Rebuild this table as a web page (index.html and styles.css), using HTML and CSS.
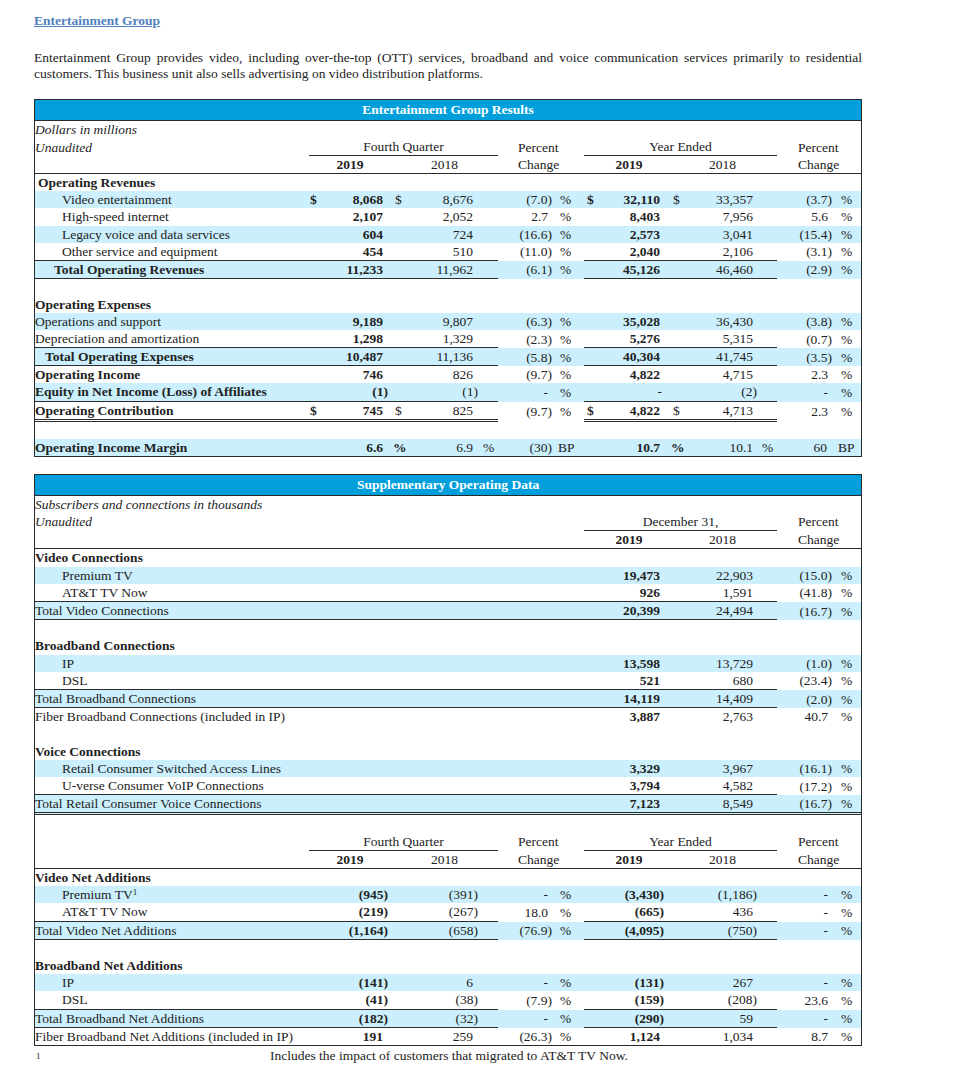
FILE: index.html
```html
<!DOCTYPE html>
<html lang="en">
<head>
<meta charset="utf-8">
<title>Entertainment Group</title>
<link rel="stylesheet" href="styles.css">
</head>
<body>
<div class="page">
  <div class="heading">Entertainment Group</div>
  <p class="intro">Entertainment Group provides video, including over-the-top (OTT) services, broadband and voice communication services primarily to residential customers. This business unit also sells advertising on video distribution platforms.</p>

  <table class="fin first">
    <colgroup>
      <col style="width:274px"><col style="width:14px"><col style="width:68px"><col style="width:14px"><col style="width:73px"><col style="width:20px"><col style="width:54px"><col style="width:32px"><col style="width:14px"><col style="width:66px"><col style="width:14px"><col style="width:80px"><col style="width:19px"><col style="width:56px"><col style="width:28px">
    </colgroup>
    <tr><th colspan="15" class="title">Entertainment Group Results</th></tr>
    <tr><td colspan="15" class="it">Dollars in millions</td></tr>
    <tr class="h"><td class="it">Unaudited</td><td colspan="5" class="grp">Fourth Quarter</td><td colspan="2" class="pc">Percent</td><td colspan="5" class="grp">Year Ended</td><td colspan="2" class="pc2">Percent</td></tr>
    <tr class="h hl"><td></td><td colspan="2" class="y1">2019</td><td colspan="3" class="y2">2018</td><td colspan="2" class="pc">Change</td><td colspan="2" class="y3">2019</td><td colspan="3" class="y4">2018</td><td colspan="2" class="pc2">Change</td></tr>

    <tr class="r"><td class="bd i0">Operating Revenues</td><td></td><td></td><td></td><td></td><td></td><td></td><td></td><td></td><td></td><td></td><td></td><td></td><td></td><td></td></tr>
    <tr class="r b"><td class="i1">Video entertainment</td><td>$</td><td>8,068</td><td>$</td><td>8,676</td><td></td><td class="ng">(7.0)</td><td>%</td><td>$</td><td>32,110</td><td>$</td><td>33,357</td><td></td><td class="ng">(3.7)</td><td>%</td></tr>
    <tr class="r"><td class="i1">High-speed internet</td><td></td><td>2,107</td><td></td><td>2,052</td><td></td><td>2.7</td><td>%</td><td></td><td>8,403</td><td></td><td>7,956</td><td></td><td>5.6</td><td>%</td></tr>
    <tr class="r b"><td class="i1">Legacy voice and data services</td><td></td><td>604</td><td></td><td>724</td><td></td><td class="ng">(16.6)</td><td>%</td><td></td><td>2,573</td><td></td><td>3,041</td><td></td><td class="ng">(15.4)</td><td>%</td></tr>
    <tr class="r u"><td class="i1">Other service and equipment</td><td></td><td>454</td><td></td><td>510</td><td></td><td class="ng">(11.0)</td><td>%</td><td></td><td>2,040</td><td></td><td>2,106</td><td></td><td class="ng">(3.1)</td><td>%</td></tr>
    <tr class="r b u"><td class="bd i2">Total Operating Revenues</td><td></td><td>11,233</td><td></td><td>11,962</td><td></td><td class="ng">(6.1)</td><td>%</td><td></td><td>45,126</td><td></td><td>46,460</td><td></td><td class="ng">(2.9)</td><td>%</td></tr>
    <tr class="e"><td colspan="15"></td></tr>
    <tr class="r"><td class="bd">Operating Expenses</td><td></td><td></td><td></td><td></td><td></td><td></td><td></td><td></td><td></td><td></td><td></td><td></td><td></td><td></td></tr>
    <tr class="r b"><td>Operations and support</td><td></td><td>9,189</td><td></td><td>9,807</td><td></td><td class="ng">(6.3)</td><td>%</td><td></td><td>35,028</td><td></td><td>36,430</td><td></td><td class="ng">(3.8)</td><td>%</td></tr>
    <tr class="r u"><td>Depreciation and amortization</td><td></td><td>1,298</td><td></td><td>1,329</td><td></td><td class="ng">(2.3)</td><td>%</td><td></td><td>5,276</td><td></td><td>5,315</td><td></td><td class="ng">(0.7)</td><td>%</td></tr>
    <tr class="r b u"><td class="bd i3">Total Operating Expenses</td><td></td><td>10,487</td><td></td><td>11,136</td><td></td><td class="ng">(5.8)</td><td>%</td><td></td><td>40,304</td><td></td><td>41,745</td><td></td><td class="ng">(3.5)</td><td>%</td></tr>
    <tr class="r"><td class="bd">Operating Income</td><td></td><td>746</td><td></td><td>826</td><td></td><td class="ng">(9.7)</td><td>%</td><td></td><td>4,822</td><td></td><td>4,715</td><td></td><td>2.3</td><td>%</td></tr>
    <tr class="r b u"><td class="bd">Equity in Net Income (Loss) of Affiliates</td><td></td><td class="ng">(1)</td><td></td><td class="ng">(1)</td><td></td><td>-</td><td>%</td><td></td><td class="dash">-</td><td></td><td class="ng">(2)</td><td></td><td>-</td><td>%</td></tr>
    <tr class="r dd"><td class="bd">Operating Contribution</td><td>$</td><td>745</td><td>$</td><td>825</td><td></td><td class="ng">(9.7)</td><td>%</td><td>$</td><td>4,822</td><td>$</td><td>4,713</td><td></td><td>2.3</td><td>%</td></tr>
    <tr class="e"><td colspan="15"></td></tr>
    <tr class="r b m"><td class="bd">Operating Income Margin</td><td></td><td>6.6</td><td><b>%</b></td><td>6.9</td><td>%</td><td class="ng">(30)</td><td class="bp">BP</td><td></td><td>10.7</td><td><b>%</b></td><td>10.1</td><td>%</td><td class="mm">60</td><td class="bp">BP</td></tr>
  </table>

  <table class="fin second">
    <colgroup>
      <col style="width:274px"><col style="width:14px"><col style="width:68px"><col style="width:14px"><col style="width:73px"><col style="width:20px"><col style="width:54px"><col style="width:32px"><col style="width:14px"><col style="width:66px"><col style="width:14px"><col style="width:80px"><col style="width:19px"><col style="width:56px"><col style="width:28px">
    </colgroup>
    <tr><th colspan="15" class="title">Supplementary Operating Data</th></tr>
    <tr><td colspan="15" class="it">Subscribers and connections in thousands</td></tr>
    <tr class="h"><td class="it">Unaudited</td><td colspan="5"></td><td colspan="2"></td><td colspan="5" class="grp">December 31,</td><td colspan="2" class="pc2">Percent</td></tr>
    <tr class="h hl"><td></td><td colspan="5"></td><td colspan="2"></td><td colspan="2" class="y3">2019</td><td colspan="3" class="y4">2018</td><td colspan="2" class="pc2">Change</td></tr>

    <tr class="r"><td class="bd">Video Connections</td><td></td><td></td><td></td><td></td><td></td><td></td><td></td><td></td><td></td><td></td><td></td><td></td><td></td><td></td></tr>
    <tr class="r b"><td class="i1">Premium TV</td><td></td><td></td><td></td><td></td><td></td><td></td><td></td><td></td><td>19,473</td><td></td><td>22,903</td><td></td><td class="ng">(15.0)</td><td>%</td></tr>
    <tr class="r uw"><td class="i1">AT&amp;T TV Now</td><td></td><td></td><td></td><td></td><td></td><td></td><td></td><td></td><td>926</td><td></td><td>1,591</td><td></td><td class="ng">(41.8)</td><td>%</td></tr>
    <tr class="r b uw"><td>Total Video Connections</td><td></td><td></td><td></td><td></td><td></td><td></td><td></td><td></td><td>20,399</td><td></td><td>24,494</td><td></td><td class="ng">(16.7)</td><td>%</td></tr>
    <tr class="e"><td colspan="15"></td></tr>
    <tr class="r"><td class="bd">Broadband Connections</td><td></td><td></td><td></td><td></td><td></td><td></td><td></td><td></td><td></td><td></td><td></td><td></td><td></td><td></td></tr>
    <tr class="r b"><td class="i1">IP</td><td></td><td></td><td></td><td></td><td></td><td></td><td></td><td></td><td>13,598</td><td></td><td>13,729</td><td></td><td class="ng">(1.0)</td><td>%</td></tr>
    <tr class="r uw"><td class="i1">DSL</td><td></td><td></td><td></td><td></td><td></td><td></td><td></td><td></td><td>521</td><td></td><td>680</td><td></td><td class="ng">(23.4)</td><td>%</td></tr>
    <tr class="r b uw"><td>Total Broadband Connections</td><td></td><td></td><td></td><td></td><td></td><td></td><td></td><td></td><td>14,119</td><td></td><td>14,409</td><td></td><td class="ng">(2.0)</td><td>%</td></tr>
    <tr class="r"><td>Fiber Broadband Connections (included in IP)</td><td></td><td></td><td></td><td></td><td></td><td></td><td></td><td></td><td>3,887</td><td></td><td>2,763</td><td></td><td>40.7</td><td>%</td></tr>
    <tr class="e"><td colspan="15"></td></tr>
    <tr class="r"><td class="bd">Voice Connections</td><td></td><td></td><td></td><td></td><td></td><td></td><td></td><td></td><td></td><td></td><td></td><td></td><td></td><td></td></tr>
    <tr class="r b"><td class="i1">Retail Consumer Switched Access Lines</td><td></td><td></td><td></td><td></td><td></td><td></td><td></td><td></td><td>3,329</td><td></td><td>3,967</td><td></td><td class="ng">(16.1)</td><td>%</td></tr>
    <tr class="r uw"><td class="i1">U-verse Consumer VoIP Connections</td><td></td><td></td><td></td><td></td><td></td><td></td><td></td><td></td><td>3,794</td><td></td><td>4,582</td><td></td><td class="ng">(17.2)</td><td>%</td></tr>
    <tr class="r b ddw"><td>Total Retail Consumer Voice Connections</td><td></td><td></td><td></td><td></td><td></td><td></td><td></td><td></td><td>7,123</td><td></td><td>8,549</td><td></td><td class="ng">(16.7)</td><td>%</td></tr>

    <tr class="e"><td colspan="15"></td></tr>
    <tr class="h"><td></td><td colspan="5" class="grp">Fourth Quarter</td><td colspan="2" class="pc">Percent</td><td colspan="5" class="grp">Year Ended</td><td colspan="2" class="pc2">Percent</td></tr>
    <tr class="h hl"><td></td><td colspan="2" class="y1">2019</td><td colspan="3" class="y2">2018</td><td colspan="2" class="pc">Change</td><td colspan="2" class="y3">2019</td><td colspan="3" class="y4">2018</td><td colspan="2" class="pc2">Change</td></tr>
    <tr class="r"><td class="bd">Video Net Additions</td><td></td><td></td><td></td><td></td><td></td><td></td><td></td><td></td><td></td><td></td><td></td><td></td><td></td><td></td></tr>
    <tr class="r b"><td class="i1">Premium TV<sup class="sup">1</sup></td><td></td><td class="ng">(945)</td><td></td><td class="ng">(391)</td><td></td><td>-</td><td>%</td><td></td><td class="ng">(3,430)</td><td></td><td class="ng">(1,186)</td><td></td><td>-</td><td>%</td></tr>
    <tr class="r u"><td class="i1">AT&amp;T TV Now</td><td></td><td class="ng">(219)</td><td></td><td class="ng">(267)</td><td></td><td>18.0</td><td>%</td><td></td><td class="ng">(665)</td><td></td><td>436</td><td></td><td>-</td><td>%</td></tr>
    <tr class="r b u"><td>Total Video Net Additions</td><td></td><td class="ng">(1,164)</td><td></td><td class="ng">(658)</td><td></td><td class="ng">(76.9)</td><td>%</td><td></td><td class="ng">(4,095)</td><td></td><td class="ng">(750)</td><td></td><td>-</td><td>%</td></tr>
    <tr class="e"><td colspan="15"></td></tr>
    <tr class="r"><td class="bd">Broadband Net Additions</td><td></td><td></td><td></td><td></td><td></td><td></td><td></td><td></td><td></td><td></td><td></td><td></td><td></td><td></td></tr>
    <tr class="r b"><td class="i1">IP</td><td></td><td class="ng">(141)</td><td></td><td>6</td><td></td><td>-</td><td>%</td><td></td><td class="ng">(131)</td><td></td><td>267</td><td></td><td>-</td><td>%</td></tr>
    <tr class="r u"><td class="i1">DSL</td><td></td><td class="ng">(41)</td><td></td><td class="ng">(38)</td><td></td><td class="ng">(7.9)</td><td>%</td><td></td><td class="ng">(159)</td><td></td><td class="ng">(208)</td><td></td><td>23.6</td><td>%</td></tr>
    <tr class="r b u"><td>Total Broadband Net Additions</td><td></td><td class="ng">(182)</td><td></td><td class="ng">(32)</td><td></td><td>-</td><td>%</td><td></td><td class="ng">(290)</td><td></td><td>59</td><td></td><td>-</td><td>%</td></tr>
    <tr class="r"><td>Fiber Broadband Net Additions (included in IP)</td><td></td><td>191</td><td></td><td>259</td><td></td><td class="ng">(26.3)</td><td>%</td><td></td><td>1,124</td><td></td><td>1,034</td><td></td><td>8.7</td><td>%</td></tr>
  </table>

  <div class="foot"><span class="fn">1</span><span>Includes the impact of customers that migrated to AT&amp;T TV Now.</span></div>
</div>
</body>
</html>
```

FILE: styles.css
```css
* { box-sizing: border-box; }

body {
  margin: 0;
  background: #ffffff;
  color: #222222;
  font-family: "Liberation Serif", "Times New Roman", serif;
  font-size: 13.5px;
}

.page {
  width: 896px;
  padding: 13px 34px 20px;
}

.heading {
  font-weight: bold;
  color: #4f81bd;
  text-decoration: underline;
  line-height: 16px;
}

.intro {
  margin: 21px 0 17px;
  line-height: 16px;
  text-align: justify;
}

.fin {
  width: 828px;
  table-layout: fixed;
  border-collapse: separate;
  border-spacing: 0;
  border: 1px solid #2b2b2b;
}

.second { margin-top: 17px; }

.fin td,
.fin th {
  box-sizing: content-box;
  padding: 0;
  height: 17.2px;
  line-height: 17.2px;
  white-space: nowrap;
  overflow: visible;
  font-weight: normal;
  text-align: left;
  vertical-align: middle;
}

.first td {
  height: 17.1px;
  line-height: 17.1px;
}

.fin th.title {
  background: #009fdb;
  color: #ffffff;
  font-weight: bold;
  text-align: center;
  height: 20px;
  line-height: 20px;
  border-bottom: 1px solid #2b2b2b;
}

.it { font-style: italic; }

.grp {
  text-align: center !important;
  border-bottom: 1px solid #2b2b2b;
}

.fin .pc { padding-left: 20px; }
.fin .pc2 { padding-left: 21px; }
.fin .y1 { text-align: center; font-weight: bold; }
.fin .y2 { text-align: center; }
.fin .y3 { text-align: center; font-weight: bold; padding-left: 10px; }
.fin .y4 { text-align: center; padding-left: 4px; }

.hl td { border-bottom: 1px solid #2b2b2b; }

tr.b { background: #cbeffc; }

.bd { font-weight: bold !important; }
.fin .i0 { padding-left: 3px; }
.fin .i1 { padding-left: 27px; }
.fin .i2 { padding-left: 19px; }
.fin .i3 { padding-left: 10px; }

/* data columns */
.r td:nth-child(2) { padding-left: 1px; font-weight: bold; }
.r td:nth-child(3) { text-align: right; padding-right: 8px; font-weight: bold; }
.r td:nth-child(3).ng { padding-right: 3px; }
.r td:nth-child(4) { padding-left: 4px; }
.r td:nth-child(5) { text-align: right; padding-right: 5px; }
.r td:nth-child(5).ng { padding-right: 0; }
.r td:nth-child(6) { padding-left: 5px; }
.r td:nth-child(7) { text-align: right; padding-right: 4px; }
.r td:nth-child(7).ng { padding-right: 0; }
.r td:nth-child(8) { padding-left: 8px; }
.r td:nth-child(9) { padding-left: 3px; font-weight: bold; }
.r td:nth-child(10) { text-align: right; padding-right: 4px; font-weight: bold; }
.r td:nth-child(10).ng { padding-right: 0; }
.r td:nth-child(10).dash { font-weight: normal; padding-right: 2px; }
.r td:nth-child(11) { padding-left: 9px; }
.r td:nth-child(12) { text-align: right; padding-right: 5px; }
.r td:nth-child(12).ng { padding-right: 1px; }
.r td:nth-child(13) { padding-left: 4px; }
.r td:nth-child(14) { text-align: right; padding-right: 5px; }
.r td:nth-child(14).ng { padding-right: 1px; }
.r td:nth-child(15) { padding-left: 8px; }

/* margin row */
.m td:nth-child(4) { padding-left: 2px; }
.m td:nth-child(11) { padding-left: 7px; }
.m td:nth-child(8) { padding-left: 6px; }
.m td:nth-child(15) { padding-left: 5px; }
.r td.mm { padding-right: 6px; }

/* rules */
.u td:nth-child(-n+6),
.u td:nth-child(n+9):nth-child(-n+13) { border-bottom: 1px solid #2b2b2b; }
.uw td:nth-child(-n+13) { border-bottom: 1px solid #2b2b2b; }
.dd td:nth-child(-n+6),
.dd td:nth-child(n+9):nth-child(-n+13) { border-bottom: 3px double #2b2b2b; }
.ddw td { border-bottom: 3px double #2b2b2b; }

.sup {
  font-size: 9px;
  line-height: 0;
  vertical-align: 4px;
}

.foot {
  display: grid;
  grid-template-columns: 236px auto;
  margin-top: 2px;
  line-height: 16px;
}

.fn {
  font-size: 9px;
  padding-left: 2px;
}
```
